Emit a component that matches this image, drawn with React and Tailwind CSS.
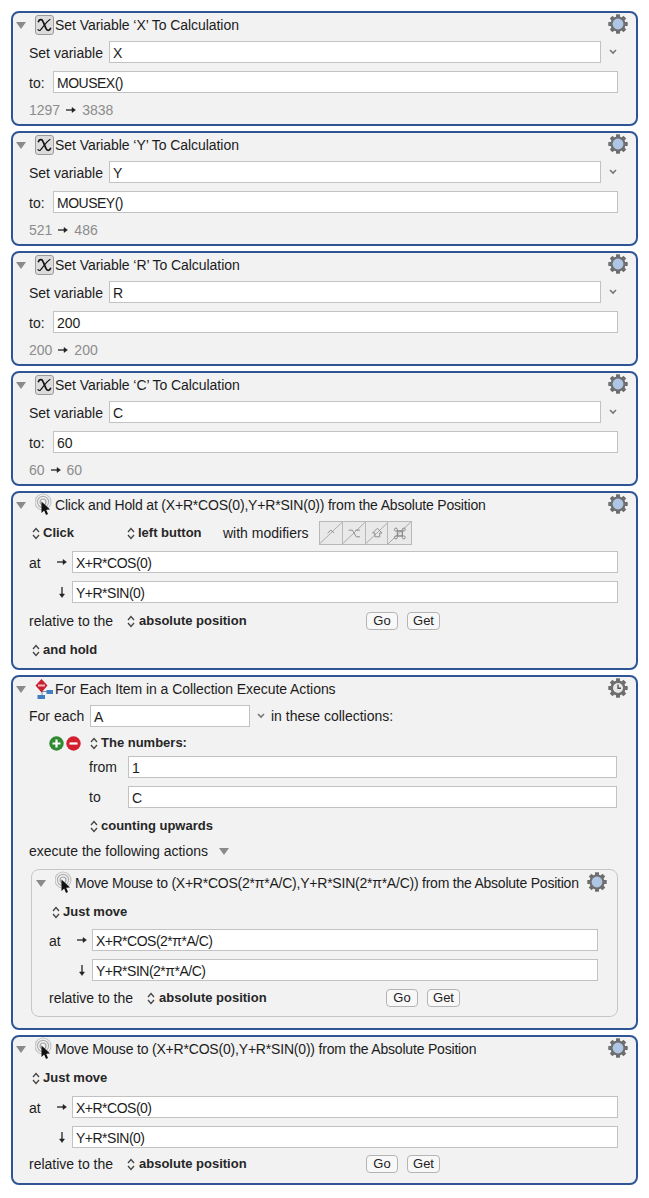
const font = { fontFamily: '"Liberation Sans", Arial, sans-serif' };

const Triangle = ({ className = '' }) => (
  <svg width="10" height="7" viewBox="0 0 10 7" className={className}>
    <path d="M0 0H10L5 7Z" fill="#8a8a8a" />
  </svg>
);

const UpDown = () => (
  <svg width="8" height="13" viewBox="0 0 8 13" fill="none" stroke="#444" strokeWidth="1.3" className="shrink-0">
    <path d="M1 5L4 1.5L7 5" />
    <path d="M1 8L4 11.5L7 8" />
  </svg>
);

const Chevron = () => (
  <svg width="8" height="6" viewBox="0 0 8 6" fill="none" stroke="#777" strokeWidth="1.6" className="shrink-0">
    <path d="M1 1L4 4L7 1" />
  </svg>
);

const ArrowRight = () => (
  <svg width="10" height="8" viewBox="0 0 10 8" fill="none" stroke="#222" className="shrink-0">
    <path d="M0 4H8" strokeWidth="1.3" />
    <path d="M6 1.5L9.5 4L6 6.5Z" fill="#222" strokeWidth="0.5" />
  </svg>
);

const ArrowDown = () => (
  <svg width="8" height="11" viewBox="0 0 8 11" fill="none" stroke="#222" className="shrink-0">
    <path d="M4 0V9" strokeWidth="1.3" />
    <path d="M1.5 7L4 10.5L6.5 7Z" fill="#222" strokeWidth="0.5" />
  </svg>
);

const teeth = [0, 45, 90, 135, 180, 225, 270, 315];

const Gear = ({ clock }) => (
  <svg width="20" height="20" viewBox="0 0 20 20">
    {teeth.map((a) => (
      <rect key={a} x="8" y="0.3" width="4" height="4" fill="#6e6e6e" transform={`rotate(${a} 10 10)`} />
    ))}
    <circle cx="10" cy="10" r="7.6" fill="#6e6e6e" />
    {clock ? (
      <>
        <circle cx="10" cy="10" r="5" fill="#e8e8e8" />
        <path d="M10 6.5V10.3H13" fill="none" stroke="#555" strokeWidth="1.4" />
      </>
    ) : (
      <circle cx="10" cy="10" r="5.4" fill="#afc6e4" />
    )}
  </svg>
);

const CalcIcon = () => (
  <div className="w-[19px] h-[20px] rounded-[3px] border border-[#9a9a9a] bg-[#dcdcdc] flex items-center justify-center shrink-0">
    <svg width="15" height="14" viewBox="0 0 15 14" fill="none" stroke="#111" strokeLinecap="round">
      <path d="M1.5 3.5C2.5 1.2 5 1 6 3.5L9 10.5C10 13 12.5 12.8 13.5 10.5" strokeWidth="1.8" />
      <path d="M13 1.5C10 3 6 9 3.5 12C2.5 13 1.5 12.5 1 11.5" strokeWidth="1.1" />
    </svg>
  </div>
);

const MouseIcon = () => (
  <svg width="20" height="24" viewBox="0 0 20 24" fill="none" className="shrink-0">
    <circle cx="8" cy="9" r="8" stroke="#c4c4c4" strokeWidth="1.2" />
    <circle cx="8" cy="9" r="5.6" stroke="#b0b0b0" strokeWidth="1.2" />
    <circle cx="8" cy="9" r="3" stroke="#a0a0a0" strokeWidth="1.2" />
    <path d="M6.5 8.5V20L9.2 17.6L11 22L13 21L11.2 16.8L15 16.5Z" fill="#111" />
  </svg>
);

const ForEachIcon = () => (
  <svg width="20" height="24" viewBox="0 0 20 24" fill="none" className="shrink-0">
    <path d="M7 15V20M7 14.5H12" stroke="#7a8ea8" strokeWidth="1" />
    <rect x="11.5" y="13" width="6.5" height="4" fill="#3f7fc4" />
    <rect x="2.5" y="18" width="7.5" height="4" fill="#3f7fc4" />
    <path d="M6.5 2L12.5 8.5L6.5 15.5L0.5 8.5Z" fill="#c9202e" />
    <rect x="3" y="7.5" width="7" height="2" fill="#f0b8bc" />
  </svg>
);

const Header = ({ icon, title, clock, nested, tight }) => (
  <div className="relative h-[24px] flex items-center pl-[3px]">
    <Triangle className="shrink-0" />
    <div className="w-[21px] ml-[8px] flex justify-center shrink-0">{icon}</div>
    <span className={`text-[14px] text-[#1c1c1c] whitespace-nowrap ${nested ? 'tracking-[-0.23px]' : tight ? 'tracking-[-0.19px]' : 'tracking-[-0.06px]'}`}>{title}</span>
    <div className={`absolute top-[1px] ${nested ? 'right-[9px]' : 'right-[8px]'}`}>
      <Gear clock={clock} />
    </div>
  </div>
);

const Field = ({ value, tight, className = '' }) => (
  <input
    readOnly
    value={value}
    className={`h-[22px] min-w-0 bg-white border border-[#c2c2c2] pl-[3px] pr-[4px] pt-[1px] text-[14px] text-[#1c1c1c] outline-none ${tight ? 'tracking-[-0.5px]' : ''} ${className}`}
    style={font}
  />
);

const Popup = ({ label, className = '' }) => (
  <div className={`flex items-center gap-[3px] h-[18px] shrink-0 ${className}`}>
    <UpDown />
    <span className="text-[13px] font-bold text-[#262626] whitespace-nowrap">{label}</span>
  </div>
);

const Btn = ({ label, className = '' }) => (
  <div className={`h-[18px] rounded-[4px] border border-[#b4b4b4] bg-[#f8f8f8] flex items-center justify-center text-[13px] text-[#222] ${className}`}>
    {label}
  </div>
);

const Label = ({ children, className = '' }) => (
  <span className={`text-[14px] leading-[18px] text-[#1c1c1c] whitespace-nowrap shrink-0 ${className}`}>{children}</span>
);

const Card = ({ children, className = '' }) => (
  <div className={`border-2 border-[#2f5597] rounded-[8px] bg-[#f2f2f2] ${className}`}>{children}</div>
);

const Body = ({ children, className = '' }) => (
  <div className={`pl-[16px] pr-[18px] ${className}`}>{children}</div>
);

const CalcCard = ({ name, value, from, to }) => (
  <Card>
    <Header icon={<CalcIcon />} title={`Set Variable ‘${name}’ To Calculation`} />
    <Body className="pb-[5px]">
      <div className="mt-[4px] flex items-center">
        <Label className="w-[80px] pt-[2px]">Set variable</Label>
        <Field value={name} className="flex-1" />
        <div className="w-[17px] flex justify-end pr-[1px] pb-[1px] shrink-0"><Chevron /></div>
      </div>
      <div className="mt-[8px] flex items-center">
        <Label className="w-[24px] pt-[2px]">to:</Label>
        <Field value={value} tight={value.includes('(')} className="flex-1" />
      </div>
      <div className="mt-[8px] h-[18px] flex items-center gap-[6px] text-[14px] text-[#8c8c8c]">
        <span>{from}</span>
        <ArrowRight />
        <span>{to}</span>
      </div>
    </Body>
  </Card>
);

const Coords = ({ x, y }) => (
  <>
    <div className="flex items-center">
      <Label className="w-[28px] pt-[2px]">at</Label>
      <div className="w-[15px] shrink-0"><ArrowRight /></div>
      <Field value={x} tight className="flex-1" />
    </div>
    <div className="mt-[8px] flex items-center">
      <span className="w-[28px] shrink-0" />
      <div className="w-[15px] pl-[1px] shrink-0"><ArrowDown /></div>
      <Field value={y} tight className="flex-1" />
    </div>
  </>
);

const Relative = ({ className = '' }) => (
  <div className={`h-[18px] flex items-center ${className}`}>
    <Label className="w-[98px]">relative to the</Label>
    <Popup label="absolute position" className="w-[239px] gap-[4px]" />
    <Btn label="Go" className="w-[32px]" />
    <Btn label="Get" className="w-[33px] ml-[9px]" />
  </div>
);

const modifierGlyphs = [
  <path key="c" d="M8 11L11.5 8L15 11" />,
  <path key="o" d="M6 8H10L14 15H18M13 8H18" />,
  <path key="s" d="M12 6L17 11H14.5V15H9.5V11H7Z" />,
  <path key="k" d="M9.5 9H14.5V14H9.5ZM9.5 9H8A1.5 1.5 0 1 1 9.5 7.5V15.5A1.5 1.5 0 1 1 8 14H16A1.5 1.5 0 1 1 14.5 15.5V7.5A1.5 1.5 0 1 1 16 9H9.5" />,
];

const Modifiers = () => (
  <div className="flex w-[93px] h-[24px] border border-[#b9b9b9] bg-[#e9e9e9] shrink-0">
    {modifierGlyphs.map((g, i) => (
      <svg key={i} width="23" height="22" viewBox="0 0 23 22" fill="none" stroke="#8a8a8a" strokeWidth="1" className={i < 3 ? 'border-r border-[#b9b9b9]' : ''}>
        <path d="M0 22L23 0" stroke="#a6a6a6" />
        {g}
      </svg>
    ))}
  </div>
);

const Round = ({ color, minus }) => (
  <svg width="15" height="15" viewBox="0 0 15 15" className="shrink-0">
    <circle cx="7.5" cy="7.5" r="7.2" fill={color} />
    <path d={minus ? 'M3.5 7.5H11.5' : 'M3.5 7.5H11.5M7.5 3.5V11.5'} stroke="#fff" strokeWidth="2.2" />
  </svg>
);

export default function App() {
  return (
    <div className="min-h-screen bg-white pt-[11px] pl-[11px] pr-[11px] flex flex-col gap-[5px]" style={font}>
      <CalcCard name="X" value="MOUSEX()" from="1297" to="3838" />
      <CalcCard name="Y" value="MOUSEY()" from="521" to="486" />
      <CalcCard name="R" value="200" from="200" to="200" />
      <CalcCard name="C" value="60" from="60" to="60" />

      {/* click and hold */}
      <Card>
        <Header tight icon={<MouseIcon />} title="Click and Hold at (X+R*COS(0),Y+R*SIN(0)) from the Absolute Position" />
        <Body className="pb-[9px]">
          <div className="mt-[4px] h-[24px] flex items-center">
            <Popup label="Click" className="w-[95px] ml-[3px]" />
            <Popup label="left button" className="w-[96px]" />
            <Label className="w-[96px]">with modifiers</Label>
            <Modifiers />
          </div>
          <div className="mt-[6px]"><Coords x="X+R*COS(0)" y="Y+R*SIN(0)" /></div>
          <Relative className="mt-[9px]" />
          <Popup label="and hold" className="mt-[11px] ml-[3px]" />
        </Body>
      </Card>

      {/* for each */}
      <Card>
        <Header icon={<ForEachIcon />} title="For Each Item in a Collection Execute Actions" clock />
        <Body className="pb-[11px]">
          <div className="mt-[4px] flex items-center">
            <Label className="w-[61px]">For each</Label>
            <Field value="A" className="w-[160px]" />
            <div className="w-[21px] flex justify-center pb-[1px] shrink-0"><Chevron /></div>
            <Label>in these collections:</Label>
          </div>
          <div className="mt-[7px] h-[18px] flex items-center">
            <div className="w-[61px] pl-[20px] flex gap-[2px] shrink-0">
              <Round color="#2f8a32" />
              <Round color="#d2202f" minus />
            </div>
            <Popup label="The numbers:" />
          </div>
          <div className="mt-[4px] ml-[60px] mr-px flex items-center">
            <Label className="w-[39px]">from</Label>
            <Field value="1" className="flex-1" />
          </div>
          <div className="mt-[8px] ml-[60px] mr-px flex items-center">
            <Label className="w-[39px]">to</Label>
            <Field value="C" className="flex-1" />
          </div>
          <Popup label="counting upwards" className="mt-[9px] ml-[61px]" />
          <div className="mt-[7px] h-[18px] flex items-center gap-[11px]">
            <Label>execute the following actions</Label>
            <Triangle />
          </div>

          {/* nested action */}
          <div className="mt-[9px] ml-[2px] border border-[#c6c6c6] rounded-[8px] p-px">
            <Header nested icon={<MouseIcon />} title="Move Mouse to (X+R*COS(2*π*A/C),Y+R*SIN(2*π*A/C)) from the Absolute Position" />
            <div className="pl-[16px] pr-[18px] pb-[8px]">
              <Popup label="Just move" className="mt-[8px] ml-[3px]" />
              <div className="mt-[8px]"><Coords x="X+R*COS(2*π*A/C)" y="Y+R*SIN(2*π*A/C)" /></div>
              <Relative className="mt-[8px]" />
            </div>
          </div>
        </Body>
      </Card>

      {/* move mouse */}
      <Card>
        <Header tight icon={<MouseIcon />} title="Move Mouse to (X+R*COS(0),Y+R*SIN(0)) from the Absolute Position" />
        <Body className="pb-[10px]">
          <Popup label="Just move" className="mt-[8px] ml-[3px]" />
          <div className="mt-[9px]"><Coords x="X+R*COS(0)" y="Y+R*SIN(0)" /></div>
          <Relative className="mt-[7px]" />
        </Body>
      </Card>
    </div>
  );
}
